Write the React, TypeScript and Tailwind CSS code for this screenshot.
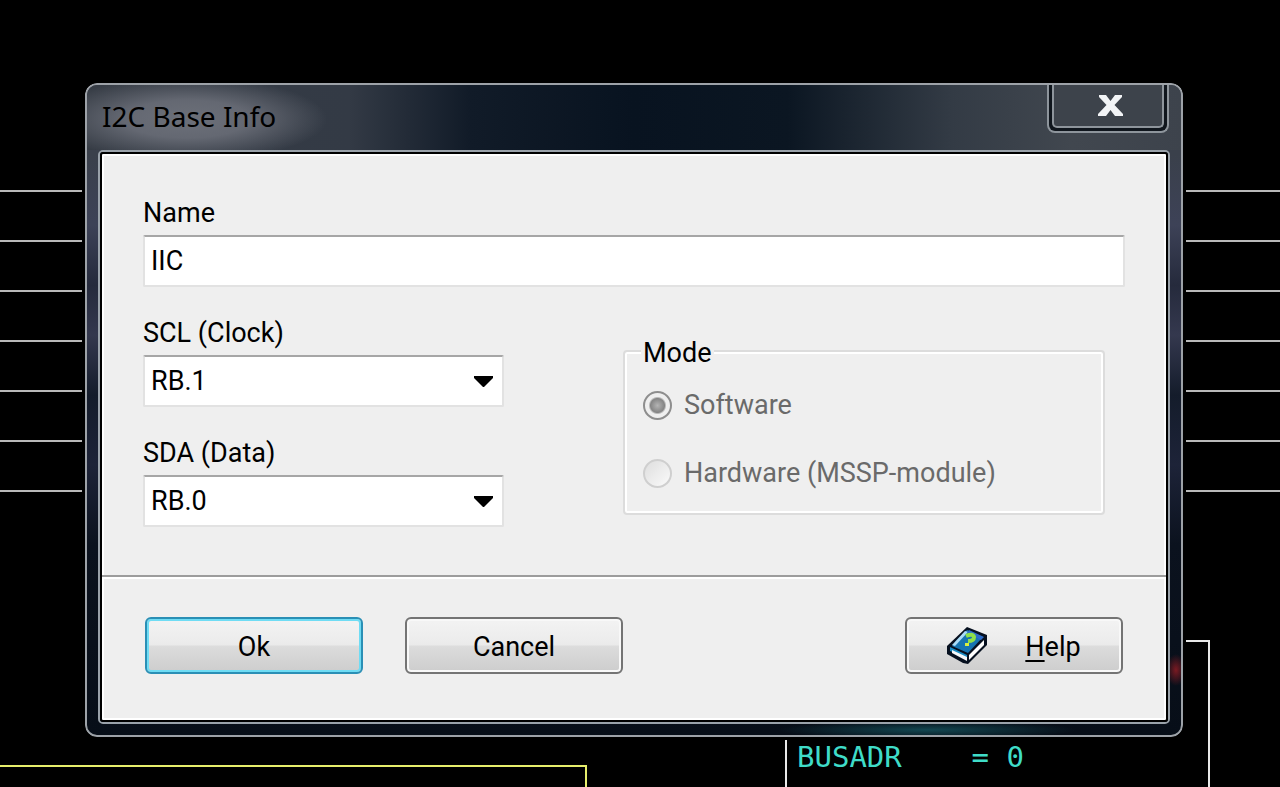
import type { ReactNode } from "react";

const BUS_LINES = [190, 240, 290, 340, 390, 440, 490];

// Schematic sheet that lies behind the dialog
function Schematic() {
  return (
    <div className="absolute inset-0 overflow-hidden">
      <svg className="absolute inset-0 h-full w-full" aria-hidden="true">
        {BUS_LINES.map((y) => (
          <line key={y} x1="0" x2="100%" y1={y + 1} y2={y + 1} stroke="#b9b9b9" strokeWidth="2" />
        ))}
        <path d="M0 766H586V900" fill="none" stroke="#e6ee6c" strokeWidth="2" />
        <path d="M786 900V641H1209V900" fill="none" stroke="#e8e8e8" strokeWidth="2" />
      </svg>
      <pre className="absolute left-[797px] top-[739px] font-['DejaVu_Sans_Mono',monospace] text-[29px] leading-9 text-[#3fdcc8]">
        BUSADR{"    "}= 0
      </pre>
    </div>
  );
}

function BookIcon() {
  return (
    <svg width="40" height="38" viewBox="0 0 40 38" aria-hidden="true">
      <path d="M20 0L40 8V18L21 37L16 36L0 27V19Z" fill="#06101f" />
      <path d="M20 3L36 10L21 26L5 19Z" fill="#1674b0" />
      <path d="M18 4L21 5L8 19L5 18Z" fill="#a9dcf8" />
      <path d="M22 3L37 10L34 13L20 6Z" fill="#2c6cc8" />
      <path d="M3 20L20 28L20 31L3 24Z" fill="#1a8cc4" />
      <path d="M5 23L20 30V34L5 26Z" fill="#f4f8fa" />
      <path d="M22 28L37 13V18L22 33Z" fill="#ffffff" />
      <path d="M19 9Q26 6 27 10Q27 14 21 14" fill="none" stroke="#8ee04a" strokeWidth="4" />
      <path d="M18 16H22V19H18Z" fill="#d8f040" />
    </svg>
  );
}

function Field({ id, label, children }: { id: string; label: string; children: ReactNode }) {
  return (
    <div className="flex flex-col">
      <label htmlFor={id} className="mb-1 leading-9">{label}</label>
      {children}
    </div>
  );
}

const box =
  "h-13 w-full appearance-none rounded-[2px] border-2 border-t-[#a6a6a6] border-x-[#e2e2e2] border-b-[#e2e2e2] bg-white pl-1.5 text-black outline-none";

function PinSelect({ id, label, value }: { id: string; label: string; value: string }) {
  return (
    <Field id={id} label={label}>
      <div className="relative">
        <select id={id} defaultValue={value} className={box}>
          <option>RB.0</option>
          <option>RB.1</option>
        </select>
        <svg className="pointer-events-none absolute right-[11px] top-[21px]" width="19" height="11" viewBox="0 0 19 11" aria-hidden="true">
          <path d="M0 0H19V2L10 11H9L0 2Z" fill="#000" />
        </svg>
      </div>
    </Field>
  );
}

function ModeOption({ label, checked }: { label: string; checked?: boolean }) {
  return (
    <label className="flex items-center gap-3 leading-9 text-[#6a6a6a]">
      <input
        type="radio"
        name="mode"
        disabled
        defaultChecked={checked}
        className="size-[29px] shrink-0 appearance-none rounded-full border-2 border-[#cfcfcf] bg-[linear-gradient(135deg,#dedede,#fafafa)] checked:border-[#8e8e8e] checked:bg-[radial-gradient(circle_at_center,#b4b4b4_0,#858585_7px,#efefef_9px)]"
      />
      {label}
    </label>
  );
}

const button =
  "flex h-[57px] w-[218px] items-center justify-center rounded-[6px] border-2 bg-[linear-gradient(#f3f3f3_0%,#ebebeb_48%,#dcdcdc_52%,#cdcdcd_100%)]";

export default function App() {
  return (
    <div className="relative min-h-screen overflow-hidden bg-black px-[85px] pt-[83px] pb-[50px] font-['Roboto','Liberation_Sans',sans-serif] text-[27px] text-black">
      <Schematic />
      <div
        role="dialog"
        aria-labelledby="dialog-title"
        className="relative mr-3 rounded-[12px] border-2 border-[#9da2a8] bg-[radial-gradient(ellipse_10px_16px_at_calc(100%_-_5px)_585px,#7a1a22,transparent),radial-gradient(ellipse_150px_9px_at_840px_calc(100%_-_5px),#124650,transparent),linear-gradient(#3a404b_70px,#3d4257_140px,#252a3c_200px,#34384e_250px,#141c2b_310px,#1d2338_380px,#0b121e_460px,#070e18)] px-[11px] pb-[11px] outline-3 outline-black"
      >
        <div className="-mx-[11px] flex h-[65px] items-start justify-between rounded-t-[10px] bg-[radial-gradient(ellipse_140px_42px_at_100px_34px,#6c7079_0,#646872_45%,transparent_100%),linear-gradient(90deg,#363c45_0,#333a45_24%,#111b28_35%,#081320_50%,#0b1622_64%,#333b45_79%,#41474f_90%,#3d434c)] pl-[15px]">
          <h1 id="dialog-title" className="pt-[13px] font-['Noto_Sans',sans-serif] text-[28px] leading-9">
            I2C Base Info
          </h1>
          <button
            type="button"
            aria-label="Close"
            className="mr-3 h-12 w-[122px] rounded-b-[8px] border-2 border-t-0 border-[#8e959c] bg-[#10161d] px-[3px] pb-[3px]"
          >
            <span className="flex h-full items-center justify-center rounded-b-[5px] border-2 border-t-0 border-[#8e959c] bg-[#3d434b] pl-1">
              <svg width="25" height="21" viewBox="0 0 25 21" aria-hidden="true">
                <path d="M1 0H8L12.5 6L17 0H24V2L16.5 10L25 19V21H17L12.5 15L8 21H0V19L8.5 10L1 2Z" fill="#f2f4f6" />
              </svg>
            </span>
          </button>
        </div>

        <div className="rounded-[5px] border-2 border-[#9aa2aa]">
          <form className="rounded-[3px] border-2 border-black bg-[#efefef] shadow-[inset_0_0_0_2px_#fff]">
            <div className="flex flex-col gap-7 px-[41px] pt-[41px] pb-12">
              <Field id="name" label="Name">
                <input id="name" type="text" defaultValue="IIC" className={box} />
              </Field>
              <div className="flex items-start gap-[119px]">
                <div className="flex w-[361px] flex-col gap-7">
                  <PinSelect id="scl" label="SCL (Clock)" value="RB.1" />
                  <PinSelect id="sda" label="SDA (Data)" value="RB.0" />
                </div>
                <fieldset className="mt-[18px] mr-5 flex-1 rounded-[4px] border-2 border-[#dcdcdc] px-4 pb-[22px] shadow-[inset_0_0_0_2px_#fff]">
                  <legend className="bg-[#efefef] px-0.5 pt-1 leading-8">Mode</legend>
                  <div className="flex flex-col gap-8 pt-[18px] pl-0.5">
                    <ModeOption label="Software" checked />
                    <ModeOption label="Hardware (MSSP-module)" />
                  </div>
                </fieldset>
              </div>
            </div>

            <div className="flex gap-[42px] border-t-2 border-[#9c9c9c] px-[43px] pt-10 pb-[46px] shadow-[inset_0_2px_0_#fff]">
              <button type="button" className={`${button} border-[#2a8fb5] shadow-[inset_0_0_0_2px_#6fdcf4]`}>
                <span className="pt-1">Ok</span>
              </button>
              <button type="button" className={`${button} border-[#747474] shadow-[inset_0_0_0_2px_#f8f8f8]`}>
                <span className="pt-1">Cancel</span>
              </button>
              <button type="button" className={`${button} ml-auto gap-[38px] border-[#747474] shadow-[inset_0_0_0_2px_#f8f8f8]`}>
                <BookIcon />
                <span className="pt-1">
                  <span className="underline underline-offset-4">H</span>elp
                </span>
              </button>
            </div>
          </form>
        </div>
      </div>
    </div>
  );
}
